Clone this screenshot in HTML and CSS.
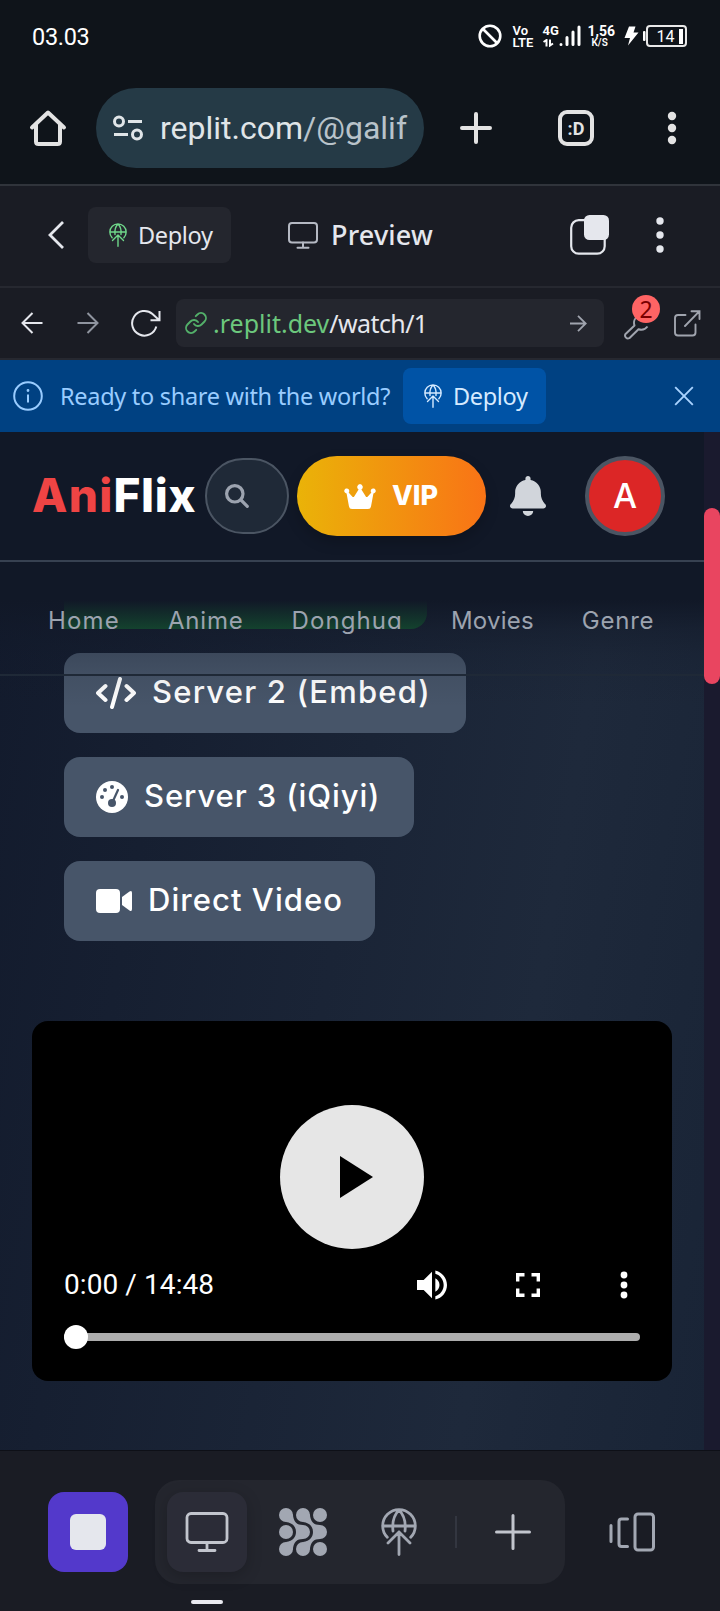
FILE: index.html
```html
<!DOCTYPE html>
<html lang="id">
<head>
<meta charset="utf-8">
<meta name="viewport" content="width=device-width">
<title>AniFlix</title>
<link rel="stylesheet" href="styles.css">
</head>
<body>
<svg class="defs" width="0" height="0" aria-hidden="true">
  <symbol id="deploy" viewBox="0 0 48 48" fill="none" stroke="currentColor" stroke-width="2.8" stroke-linecap="round" stroke-linejoin="round">
    <path d="M12.3 29.3A16.3 16.3 0 1 1 35.7 29.3M8 18H40M24 2C19 7 17 14 18 23M24 2C29 7 31 14 30 23M13 35L24 24L35 35M24 24V46.5"/>
  </symbol>
</svg>

<div class="status">
  <span class="clock"><span class="t">03.03</span></span>
  <svg class="s-no" width="24" height="24" viewBox="0 0 24 24" fill="none" stroke="#fff" stroke-width="2.6"><circle cx="12" cy="12" r="10.3"/><path d="M5 5L19 19"/></svg>
  <div class="stack volte"><b>Vo</b><b>LTE</b></div>
  <div class="stack net"><b>4G</b><svg width="11" height="8" viewBox="0 0 11 8" fill="none" stroke="#fff" stroke-width="2"><path d="M0.5 3L3.5 1V7.500M7 0.500V6.500L10 4.500"/></svg></div>
  <svg class="s-bars" width="22" height="22" viewBox="0 0 22 22" fill="none" stroke="#fff" stroke-width="3" stroke-linecap="round"><path d="M2 19.500V19.600M8 12.500V19.500M14 7V19.500M20 2V19.500"/></svg>
  <div class="stack speed"><b>1,56</b><b class="unit">K/S</b></div>
  <svg class="s-bolt" width="15" height="20" viewBox="0 0 15 20" fill="#fff"><path d="M5 0.500H11.500L9.500 6.500H14.500L4 19.500L6 12H0.500Z"/></svg>
  <svg class="s-nub" width="3" height="10" viewBox="0 0 3 10" fill="#fff"><rect width="2.500" height="10" rx="1"/></svg>
  <div class="battery"><span>14</span><i></i></div>
</div>

<div class="chrome">
  <svg class="c-home" width="38" height="38" viewBox="0 0 38 38" fill="none" stroke="#e3e3e3" stroke-width="4" stroke-linecap="round" stroke-linejoin="round"><path d="M3 18.500L19 3.500L35 18.500M7 16V32.500Q7 35 9.500 35H28.500Q31 35 31 32.500V16"/></svg>
  <div class="omnibox">
    <svg width="32" height="28" viewBox="0 0 32 28" fill="none" stroke="#e0e5e8" stroke-width="3"><circle cx="7" cy="7.500" r="4.500"/><path d="M16 7.500H30M2 20.500H16"/><circle cx="25" cy="20.500" r="4.500"/></svg>
    <span class="t">replit.com<em>/@galif</em></span>
  </div>
  <svg class="c-plus" width="34" height="34" viewBox="0 0 34 34" stroke="#e3e3e3" stroke-width="4" stroke-linecap="round"><path d="M3 17H31M17 3V31"/></svg>
  <div class="tabs"><span>:D</span></div>
  <svg class="c-dots" width="10" height="34" viewBox="0 0 10 34" fill="#e3e3e3"><circle cx="5" cy="5" r="4.200"/><circle cx="5" cy="17" r="4.200"/><circle cx="5" cy="29" r="4.200"/></svg>
</div>

<div class="pane-head">
  <svg class="p-back" width="18" height="30" viewBox="0 0 18 30" fill="none" stroke="#e5e7ed" stroke-width="2.800"><path d="M16 2L3 15L16 28"/></svg>
  <div class="btn"><svg class="green" width="24" height="24"><use href="#deploy"/></svg><span class="t">Deploy</span></div>
  <svg class="p-mon" width="30" height="27" viewBox="0 0 30 27" fill="none" stroke="#b5b9c3" stroke-width="2" stroke-linecap="round"><rect x="1" y="1" width="28" height="19.500" rx="3"/><path d="M15 20.500V25.500M9.500 25.800H20.500"/></svg>
  <span class="title"><span class="t">Preview</span></span>
  <svg class="p-copy" width="40" height="40" viewBox="0 0 40 40"><rect x="1.200" y="5.200" width="33.500" height="33.500" rx="7.500" fill="none" stroke="#e5e7ed" stroke-width="2.200"/><rect x="14" y="0" width="25" height="25" rx="5.500" fill="#e5e7ed"/></svg>
  <svg class="p-dots" width="8" height="36" viewBox="0 0 8 36" fill="#e5e7ed"><circle cx="4" cy="4" r="3.700"/><circle cx="4" cy="18" r="3.700"/><circle cx="4" cy="32" r="3.700"/></svg>
</div>

<div class="urlbar">
  <svg class="u-back" width="22" height="22" viewBox="0 0 22 22" fill="none" stroke="#e5e7ed" stroke-width="2"><path d="M21.500 11H2M11.500 1L1.500 11L11.500 21"/></svg>
  <svg class="u-fwd" width="22" height="22" viewBox="0 0 22 22" fill="none" stroke="#8f949f" stroke-width="2"><path d="M0.500 11H20M10.500 1L20.500 11L10.500 21"/></svg>
  <svg class="u-reload" width="30" height="28" viewBox="0 0 30 28" fill="none" stroke="#e5e7ed" stroke-width="2"><path d="M25.300 17.500A12.300 12.300 0 1 1 21.500 5L28 11M28.500 2V11.200H19.500"/></svg>
  <div class="address">
    <svg width="24" height="24" viewBox="0 0 24 24" fill="none" stroke="#53b06a" stroke-width="1.900" stroke-linecap="round"><path d="M10 13a5 5 0 0 0 7.540.54l3-3a5 5 0 0 0-7.070-7.070l-1.720 1.710M14 11a5 5 0 0 0-7.540-.54l-3 3a5 5 0 0 0 7.070 7.070l1.710-1.710"/></svg>
    <span class="url"><span class="t host">.replit.dev</span><span class="t path">/watch/1</span></span>
    <svg class="go" width="17" height="17" viewBox="0 0 17 17" fill="none" stroke="#a0a4ae" stroke-width="1.800"><path d="M0 8.500H15.500M8 0.800L15.700 8.500L8 16.200"/></svg>
  </div>
  <div class="tool">
    <svg width="26" height="26" viewBox="0 0 26 26" fill="none" stroke="#a0a4ae" stroke-width="2" stroke-linejoin="round"><path d="M15 2A8 8 0 0 0 11.500 11.500L2.300 20.300A3 3 0 0 0 6.300 24.200L15.500 15.200Q21 17 24.500 12.500"/></svg>
    <span class="badge">2</span>
  </div>
  <svg class="u-ext" width="27" height="27" viewBox="0 0 27 27" fill="none" stroke="#a0a4ae" stroke-width="1.900" stroke-linecap="round"><path d="M11.500 5H4Q1 5 1 8V22.500Q1 25.500 4 25.500H18.500Q21.500 25.500 21.500 22.500V14.500M17.500 1.200H25.500V9M25.500 1.200L11 16"/></svg>
</div>

<div class="banner">
  <svg width="30" height="30" viewBox="0 0 30 30" fill="none" stroke="#99ccff" stroke-width="2"><circle cx="15" cy="15" r="13.800"/><path d="M15 13.500V21.500"/><circle cx="15" cy="9.500" r="0.800" fill="#99ccff" stroke-width="1.200"/></svg>
  <span class="msg"><span class="t">Ready to share with the world?</span></span>
  <div class="btn blue"><svg width="24" height="24"><use href="#deploy"/></svg><span class="t">Deploy</span></div>
  <svg class="b-close" width="20" height="20" viewBox="0 0 20 20" stroke="#a9d3ff" stroke-width="1.900"><path d="M1.200 1.200L18.800 18.800M18.800 1.200L1.200 18.800"/></svg>
</div>

<div class="viewport">
  <main class="site">
    <header class="site-head">
      <div class="top">
        <div class="logo"><span class="t red">Ani</span><span class="t flix">Flix</span></div>
        <div class="search"><svg width="24" height="24" viewBox="0 0 24 24" fill="none" stroke="#9ca3af" stroke-width="3.200" stroke-linecap="round"><circle cx="9.800" cy="9.800" r="8.200"/><path d="M16 16L22.300 22.300"/></svg></div>
        <div class="vip"><svg width="32" height="25" viewBox="0 0 32 25" fill="#fff"><path d="M16 0A3 3 0 0 1 17.400 5.500L21.800 12.500Q22.500 13.600 23.600 12.700L27.400 8.600A2.500 2.500 0 1 1 29.400 9.400L27 22.500Q26.600 25 24 25H8Q5.400 25 5 22.500L2.600 9.400A2.500 2.500 0 1 1 4.600 8.600L8.400 12.700Q9.500 13.600 10.200 12.500L14.600 5.500A3 3 0 0 1 16 0Z"/></svg><span class="t">VIP</span></div>
        <svg class="bell" width="36" height="40" viewBox="0 0 448 512" fill="#d1d5db" preserveAspectRatio="none"><path d="M224 0c-17.700 0-32 14.300-32 32v19.200C119 66 64 130.600 64 208v18.800c0 47-17.300 92.400-48.500 127.600l-7.400 8.300c-8.400 9.400-10.400 22.900-5.300 34.400S19.400 416 32 416h384c12.600 0 24-7.400 29.200-18.900s3.100-25-5.300-34.400l-7.400-8.300C401.300 319.200 384 273.900 384 226.800V208c0-77.400-55-142-128-156.800V32c0-17.700-14.300-32-32-32zM288 448H160c0 17 6.700 33.300 18.700 45.300S207 512 224 512s33.300-6.700 45.300-18.700S288 465 288 448z"/></svg>
        <div class="avatar">A</div>
      </div>
      <nav><span class="t n1">Home</span><span class="t n2">Anime</span><span class="t n3">Donghua</span><span class="t n4">Movies</span><span class="t n5">Genre</span></nav>
    </header>
    <div class="ghost"></div>
    <section class="servers">
      <div class="server w2"><svg width="40" height="32" viewBox="0 0 40 32" fill="none" stroke="#fff" stroke-width="4" stroke-linecap="round" stroke-linejoin="round"><path d="M9.500 9L2 16L9.500 23M30.500 9L38 16L30.500 23M24 2L16 30"/></svg><span class="t s2">Server 2 (Embed)</span></div>
      <div class="server w3"><svg width="32" height="32" viewBox="0 0 32 32"><circle cx="16" cy="16" r="16" fill="#fff"/><g fill="#475569"><circle cx="16" cy="6" r="2"/><circle cx="9" cy="9" r="2"/><circle cx="6" cy="16" r="2"/><circle cx="26" cy="16" r="2"/><circle cx="16" cy="22" r="4"/></g><path d="M17 20L22 9" stroke="#475569" stroke-width="2.200" stroke-linecap="round"/></svg><span class="t s3">Server 3 (iQiyi)</span></div>
      <div class="server w4"><svg width="36" height="32" viewBox="0 0 36 32" fill="#fff"><rect y="4" width="24" height="24" rx="4"/><path d="M26 12L33.500 6.500Q36 5 36 8V24Q36 27 33.500 25.500L26 20Z"/></svg><span class="t s4">Direct Video</span></div>
    </section>
    <section class="player">
      <div class="play"><svg width="34" height="42" viewBox="0 0 34 42"><path d="M0 0L33 21L0 42Z"/></svg></div>
      <div class="controls">
        <span class="time"><span class="t">0:00 / 14:48</span></span>
        <svg class="v-vol" width="30" height="30" viewBox="3 3 18 18" fill="#fff"><path d="M3 9v6h4l5 5V4L7 9H3zM16.500 12c0-1.770-1.020-3.290-2.500-4.030v8.050c1.480-.73 2.500-2.250 2.500-4.020zM14 3.230v2.060c2.890.86 5 3.540 5 6.710s-2.110 5.850-5 6.710v2.060c4.010-.91 7-4.490 7-8.770s-2.990-7.860-7-8.770z"/></svg>
        <svg class="v-full" width="24" height="24" viewBox="0 0 24 24" fill="none" stroke="#fff" stroke-width="3.400"><path d="M1.700 8.500V1.700H8.500M15.500 1.700H22.300V8.500M22.300 15.500V22.300H15.500M8.500 22.300H1.700V15.500"/></svg>
        <svg class="v-dots" width="8" height="28" viewBox="0 0 8 28" fill="#fff"><circle cx="4" cy="4" r="3.400"/><circle cx="4" cy="14" r="3.400"/><circle cx="4" cy="24" r="3.400"/></svg>
      </div>
      <div class="seek"><i></i></div>
    </section>
  </main>
  <div class="scroll"><i></i></div>
</div>

<div class="dock">
  <div class="stop"><i></i></div>
  <div class="group">
    <div class="cell active"><svg width="44" height="40" viewBox="0 0 44 40" fill="none" stroke="#c2c5cd" stroke-width="2.800" stroke-linecap="round"><rect x="2" y="1.500" width="40" height="29" rx="4"/><path d="M22 30.500V38M14 38.500H30"/></svg></div>
    <div class="cell"><svg width="48" height="48" viewBox="0 0 48 48" fill="#a2a7b2"><g id="chain"><circle cx="7" cy="7" r="7"/><circle cx="7" cy="41" r="7"/><path d="M13.900 6C14.300 14 18 17 24 17A7 7 0 0 1 24 31C18 31 14.300 34 13.900 42L7 34C14 33 17 29 17 24S14 15 7 14Z"/></g><use href="#chain" x="17"/><circle cx="7" cy="24" r="7"/><circle cx="41" cy="7" r="7"/><circle cx="41" cy="41" r="7"/></svg></div>
    <div class="cell mid"><svg width="48" height="48"><use href="#deploy"/></svg></div>
    <div class="rule"></div>
    <div class="cell"><svg width="36" height="36" viewBox="0 0 36 36" stroke="#c2c5cd" stroke-width="3" stroke-linecap="round"><path d="M1.500 18H34.500M18 1.500V34.500"/></svg></div>
  </div>
  <svg class="d-tabs" width="46" height="40" viewBox="0 0 46 40" fill="none" stroke="#a2a7b2" stroke-width="3" stroke-linecap="round"><path d="M2 13.500V29.500M18.500 7H12.500Q10 7 10 9.500V32Q10 34.500 12.500 34.500H18.500"/><rect x="26" y="2" width="18.500" height="36" rx="3"/></svg>
</div>
<div class="mark"><i></i></div>
</body>
</html>
```
FILE: styles.css
```css
* { box-sizing: border-box; }
body { margin: 0; width: 720px; height: 1611px; overflow: hidden; background: #1a1c24; font-family: "Noto Sans", sans-serif; color: #e5e7ed; display: flex; flex-direction: column; }
svg { display: block; flex: none; }
.defs { position: absolute; }
.t { white-space: pre; }
i, em { font-style: normal; }

/* phone status bar */
.status { height: 72px; flex: none; background: #0f141a; display: flex; align-items: center; padding-left: 32px; font-family: Roboto, sans-serif; color: #fff; }
.clock { width: 445.500px; padding-top: 1px; font-size: 23.500px; letter-spacing: -0.3px; }
.stack { display: flex; flex-direction: column; }
.stack b { font-size: 13px; line-height: 12px; font-weight: 700; }
.volte { margin-left: 11px; width: 30px; padding-top: 2px; }
.volte b { font-weight: 600; font-size: 13px; }
.net { width: 16px; gap: 2px; }
.s-bars { margin-right: 7px; }
.speed { width: 36px; }
.speed b { font-size: 14px; line-height: 14px; }
.speed .unit { padding-left: 4px; font-size: 10px; line-height: 10px; font-weight: 600; }
.s-bolt { margin-right: 4px; }
.battery { width: 41px; height: 22px; border: 2px solid #e9e9e9; border-radius: 4px; display: flex; align-items: center; padding-left: 9px; gap: 4px; font-size: 16px; }
.battery span { width: 18px; }
.battery i { width: 4px; height: 15px; background: #fff; }

/* browser toolbar */
.chrome { height: 114px; flex: none; background: #0f141a; border-bottom: 2px solid #30343b; display: flex; align-items: center; padding: 0 0 0 29px; font-family: Roboto, sans-serif; }
.omnibox { width: 328px; height: 80px; border-radius: 40px; margin: 0 35px 0 29px; background: #253a46; display: flex; align-items: center; padding-left: 16px; gap: 16px; font-size: 32px; color: #e0e5e8; }
.omnibox em { color: #b9c3ca; }
.tabs { width: 36px; height: 36px; border: 4px solid #e3e3e3; border-radius: 9px; margin-left: 65px; display: flex; justify-content: center; align-items: center; font-weight: 700; font-size: 18px; color: #e3e3e3; }
.c-dots { margin-left: 73px; }

/* preview pane header */
.pane-head { height: 102px; flex: none; border-bottom: 2px solid #262830; display: flex; align-items: center; padding: 0 0 2px 47px; }
.btn { width: 143px; height: 56px; border-radius: 8px; background: #24262e; display: flex; align-items: center; padding-left: 18px; gap: 8px; font-size: 23.500px; letter-spacing: -0.35px; }
.p-back { margin-right: 23px; }
.green { color: #6fd78a; }
.p-mon { margin: 0 13px 0 57px; }
.title { width: 240px; font-size: 27px; font-weight: 500; letter-spacing: 0.2px; padding-bottom: 2px; }
.p-copy { margin-right: 46px; margin-left: -1px; }

/* address row */
.urlbar { height: 72px; flex: none; border-bottom: 2px solid #262830; display: flex; align-items: center; padding-left: 21px; }
.u-fwd { margin: 0 32px 0 34px; }
.address { width: 428px; height: 48px; margin: 0 19px 0 15px; border-radius: 8px; background: #24262e; display: flex; align-items: center; padding-left: 8px; gap: 5px; font-size: 25px; }
.url { width: 352px; }
.host { color: #6cc87d; }
.path { letter-spacing: -0.6px; }
.tool { position: relative; width: 38px; height: 48px; padding-top: 15px; }
.badge { position: absolute; left: 9px; top: -4px; width: 28px; height: 28px; border-radius: 50%; background: #ff6464; color: #7a0000; font-size: 23px; line-height: 28px; text-align: center; }
.u-ext { margin-left: 13px; }

/* share banner */
.banner { height: 72px; flex: none; background: #004182; color: #99ccff; display: flex; align-items: center; padding-left: 13px; }
.msg { width: 342px; margin-left: 17px; margin-right: 1px; font-size: 23.500px; letter-spacing: -0.3px; }
.btn.blue { background: #0053a6; color: #d5eaff; }
.b-close { margin-left: 128px; }

/* embedded page */
.viewport { height: 1018px; flex: none; display: flex; }
.site { position: relative; width: 704px; overflow: hidden; background: linear-gradient(100deg, #121a2c 0%, #1e293b 72%, #192436 100%); font-family: Inter, sans-serif; font-feature-settings: "cv11"; }
.scroll { width: 16px; background: #1a1a2e; padding-top: 76px; }
.scroll i { display: block; height: 176px; border-radius: 8px; background: #e94560; }
.site-head { position: absolute; z-index: 2; inset: 0 0 auto; height: 290px; background: linear-gradient(#111827 168px, #11182773 197px, #11182733 222px, #11182714 246px, #11182700 275px); }
.top { height: 130px; border-bottom: 2px solid #374151; display: flex; align-items: center; padding-left: 32px; }
.logo { width: 173px; padding-bottom: 2px; font-size: 46px; font-weight: 800; color: #fff; }
.red { color: #ef4444; letter-spacing: 1.300px; }
.flix { letter-spacing: 0.6px; }
.search { width: 84px; height: 76px; border: 2px solid #4b5563; border-radius: 38px; background: #1f2937; display: flex; align-items: center; padding-left: 18px; }
.vip { width: 189px; height: 80px; margin-left: 8px; border-radius: 40px; background: linear-gradient(90deg, #eab308, #f97316); box-shadow: 0 6px 14px #0003; display: flex; align-items: center; padding-left: 47px; gap: 16px; font-size: 27px; font-weight: 800; color: #fff; }
.vip .t { padding-bottom: 2px; }
.bell { margin: 0 39px 0 24px; }
.avatar { width: 80px; height: 80px; border: 4px solid #4b5563; border-radius: 50%; background: #dc2626; color: #fff; font-size: 34px; font-weight: 500; display: flex; align-items: center; justify-content: center; padding-bottom: 1px; }
nav { height: 114px; border-bottom: 2px solid #1f2937; display: flex; align-items: center; padding: 4px 0 0 48px; color: #9ca3af; font-size: 24px; gap: 48px; }
.n1 { letter-spacing: 1.170px; }
.n2 { letter-spacing: 0.8px; }
.n3 { letter-spacing: 1.100px; }
.n4 { letter-spacing: 0.230px; }
.n5 { letter-spacing: 0.760px; }
.ghost { width: 363px; height: 40px; margin: 157px 0 24px 64px; border-radius: 0 0 16px 0; background: #166534; }
.servers { display: flex; flex-direction: column; gap: 24px; padding-left: 64px; }
.server { height: 80px; border-radius: 16px; background: #475569; display: flex; align-items: center; padding-left: 32px; gap: 16px; color: #fff; font-size: 31px; font-weight: 500; }
.server .t { padding-bottom: 3px; }
.w2 { width: 402px; }
.w3 { width: 350px; }
.w4 { width: 311px; }
.s2 { letter-spacing: 1.200px; }
.s3 { letter-spacing: 0.9px; }
.s4 { letter-spacing: 1.050px; }
.player { width: 640px; height: 360px; margin: 80px 0 0 32px; border-radius: 16px; background: #000; color: #fff; font-family: Roboto, sans-serif; padding: 84px 32px 0; }
.play { width: 144px; height: 144px; margin: 0 auto; border-radius: 50%; background: #e6e6e6; display: flex; align-items: center; padding-left: 60px; }
.controls { height: 72px; display: flex; align-items: center; font-size: 28px; }
.time { width: 353px; letter-spacing: 0.080px; padding-bottom: 1px; }
.v-full { margin: 0 80px 0 69px; }
.seek { height: 8px; margin-top: 12px; border-radius: 4px; background: #adadad; display: flex; align-items: center; }
.seek i { width: 24px; height: 24px; border-radius: 50%; background: #fff; }

/* bottom dock */
.dock { height: 134px; flex: none; border-top: 1px solid #0e1017; display: flex; align-items: center; padding: 29px 0 0 48px; }
.stop { width: 80px; height: 80px; border-radius: 16px; background: #5339cb; display: flex; align-items: center; justify-content: center; margin-right: 27px; }
.stop i { width: 36px; height: 36px; border-radius: 6px; background: #e5e7ed; }
.group { width: 410px; height: 104px; border-radius: 24px; background: #24262e; display: flex; align-items: center; padding-left: 12px; }
.cell { flex: none; width: 80px; height: 80px; border-radius: 16px; display: flex; align-items: center; justify-content: center; margin-right: 16px; }
.cell.active { background: #2b2c37; box-shadow: 0 4px 16px #0003; }
.cell.mid { color: #a2a7b2; }
.rule { flex: none; width: 2px; height: 32px; background: #333640; margin-right: 16px; }
.d-tabs { margin-left: 44px; }
.mark { padding: 16px 0 0 191px; }
.mark i { display: block; width: 32px; height: 4px; border-radius: 2px; background: #e9eaf0; }
```
